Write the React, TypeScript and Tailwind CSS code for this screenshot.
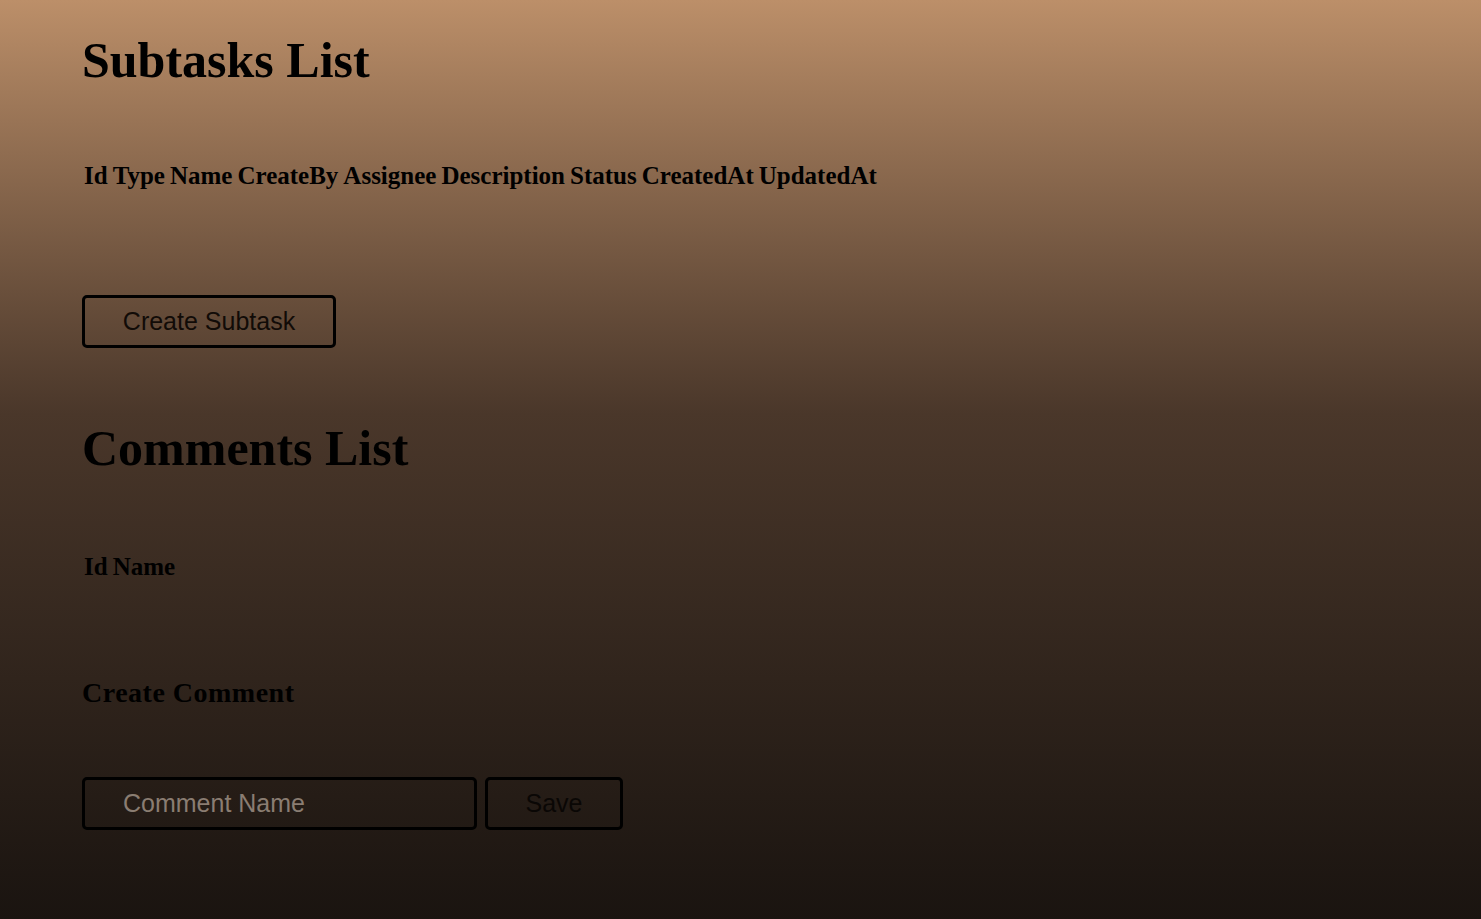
export default function App() {
  const serif = { fontFamily: '"Liberation Serif", "Times New Roman", serif' };
  const sans = { fontFamily: '"Liberation Sans", Arial, sans-serif' };
  return (
    <div className="min-h-[919px] w-full bg-gradient-to-b from-[#bc8f69] via-[#4a372a] via-45% to-[#1a1410] text-black" style={serif}>
      <div className="pl-[82px] pt-[30px] flex flex-col items-start">
        <h1 className="text-[50px] font-bold leading-[60px] m-0">Subtasks List</h1>
        <table className="mt-[68px] -ml-[2px] border-separate border-spacing-[3px]">
          <thead>
            <tr>
              {['Id', 'Type', 'Name', 'CreateBy', 'Assignee', 'Description', 'Status', 'CreatedAt', 'UpdatedAt'].map((h) => (
                <th key={h} className="p-[1px] text-[25px] font-bold leading-[28px]">{h}</th>
              ))}
            </tr>
          </thead>
        </table>
        <button className="mt-[101px] w-[254px] h-[53px] border-[3px] border-black rounded-[5px] text-[25px] text-[#110b07]" style={sans}>
          Create Subtask
        </button>
        <h1 className="mt-[70px] text-[50px] font-bold leading-[60px] m-0">Comments List</h1>
        <table className="mt-[71px] -ml-[2px] border-separate border-spacing-[3px]">
          <thead>
            <tr>
              {['Id', 'Name'].map((h) => (
                <th key={h} className="p-[1px] text-[25px] font-bold leading-[28px]">{h}</th>
              ))}
            </tr>
          </thead>
        </table>
        <h3 className="mt-[92px] text-[28px] font-bold leading-[32px] tracking-[0.5px]">Create Comment</h3>
        <div className="mt-[68px] flex gap-[8px]">
          <input
            placeholder="Comment Name"
            className="w-[395px] h-[53px] border-[3px] border-black rounded-[5px] bg-transparent px-[38px] text-[25px] placeholder:text-[#8a7d72] outline-none"
            style={sans}
          />
          <button className="w-[138px] h-[53px] border-[3px] border-black rounded-[5px] text-[25px] text-[#0a0705]" style={sans}>
            Save
          </button>
        </div>
      </div>
    </div>
  );
}
